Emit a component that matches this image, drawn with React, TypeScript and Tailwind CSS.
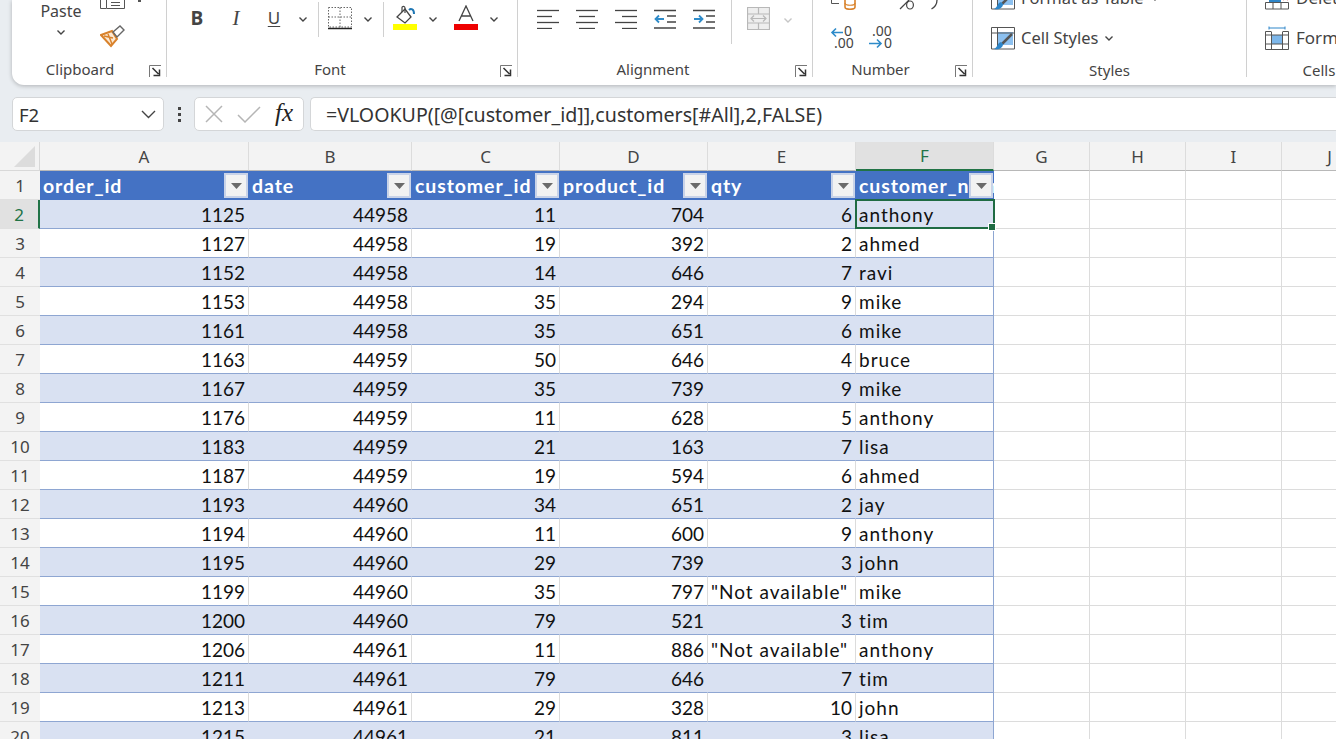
import React from "react";

const Chev = ({ className = "" }: { className?: string }) => (
  <svg width="10" height="7" viewBox="0 0 10 7" className={`shrink-0 ${className}`}>
    <path d="M1.5 1.5 L5 5 L8.5 1.5" fill="none" stroke="#444" strokeWidth="1.4" />
  </svg>
);

const Launcher = () => (
  <svg width="12" height="12" viewBox="0 0 12 12" className="absolute right-[5px] top-[6px]">
    <path d="M.5 12 V.5 H12" fill="none" stroke="#777" strokeWidth="1" />
    <path d="M3.5 3 L9.5 9 M10.5 4.5 V10.5 H4.5" fill="none" stroke="#333" strokeWidth="1.5" />
  </svg>
);

const Sep = ({ h = "h-[35px]", c = "ml-0" }: { h?: string; c?: string }) => <div className={`w-px bg-[#d0d0d0] shrink-0 ${h} ${c}`} />;

function Group({ w, label, launcher, children, last, pl = 0, pr = 0, pt = 1 }: { w: string; label: string; launcher?: boolean; children: React.ReactNode; last?: boolean; pl?: number; pr?: number; pt?: number }) {
  return (
    <div className={`${w} shrink-0 flex flex-col h-[77px] ${last ? "" : "border-r border-[#d0d0d0]"}`}>
      <div className="h-[59px] overflow-hidden">{children}</div>
      <div className="relative h-[18px] flex items-center justify-center text-[15px] text-[#444] leading-none">
        <span style={{ paddingLeft: pl, paddingRight: pr, paddingTop: pt * 2 }}>{label}</span>
        {launcher && <Launcher />}
      </div>
    </div>
  );
}

const AlignIcon = ({ kind }: { kind: "l" | "c" | "r" }) => {
  const rows = kind === "l" ? [[0, 22], [0, 15], [0, 22], [0, 15]] : kind === "c" ? [[0, 22], [3, 19], [0, 22], [3, 19]] : [[0, 22], [7, 22], [0, 22], [7, 22]];
  return (
    <svg width="22" height="21" viewBox="0 0 22 21">
      {rows.map((r, i) => (
        <path key={i} d={`M${r[0]} ${2.5 + i * 6} H${r[1]}`} stroke="#444" strokeWidth="1.3" />
      ))}
    </svg>
  );
};

const IndentIcon = ({ dir }: { dir: "in" | "out" }) => (
  <svg width="22" height="21" viewBox="0 0 22 21">
    <path d="M0 2.5 H22 M0 20 H22" stroke="#444" strokeWidth="1.3" />
    <path d="M13 8 H22 M13 14 H22" stroke="#444" strokeWidth="1.3" />
    {dir === "out" ? (
      <path d="M10 11 H1.5 M5 7.5 L1.5 11 L5 14.5" fill="none" stroke="#2e8bc9" strokeWidth="1.8" />
    ) : (
      <path d="M1 11 H9.5 M6 7.5 L9.5 11 L6 14.5" fill="none" stroke="#2e8bc9" strokeWidth="1.8" />
    )}
  </svg>
);

const CellStylesIcon = () => (
  <svg width="24" height="23" viewBox="0 0 24 23" className="shrink-0">
    <rect x="6" y="5" width="16" height="13" fill="#8cc0ef" />
    <path d="M.5 22 V.5 H23.5 V22 H.5 M.5 6 H23.5 M6.5 .5 V22" fill="none" stroke="#555" strokeWidth="1" />
    <path d="M21 7 L11 17" stroke="#555" strokeWidth="2.5" />
    <path d="M10 15 C6 16 7 20 3 22 C8 23 12 21 12 17 Z" fill="#2e86c9" />
  </svg>
);

function Ribbon() {
  return (
    <div className="ml-[12px] h-[85px] bg-white rounded-bl-[12px] shadow-[0_1px_4px_rgba(0,0,0,0.25)] flex overflow-hidden font-['Noto_Sans',sans-serif]">
      {/* Clipboard */}
      <Group w="w-[155px]" label="Clipboard" launcher pr={18}>
        <div className="flex">
          <div className="ml-[28px] w-[42px] flex flex-col items-center text-[16px] text-[#444] leading-[22px]">
            <span>Paste</span>
            <Chev className="mt-[7px]" />
          </div>
          <div className="ml-[18px] flex flex-col">
            <div className="flex items-start">
              <svg width="26" height="9" viewBox="0 0 26 9">
                <path d="M.5 0 V8.5 H6" fill="none" stroke="#555" />
                <path d="M6.5 0 V8.5 H24.5 V0" fill="none" stroke="#555" />
                <path d="M11 2.5 H20 M11 5.5 H20" stroke="#555" />
              </svg>
              <span className="ml-[12px] w-[3px] h-[2px] bg-[#555]" />
            </div>
            <svg width="26" height="24" viewBox="0 0 26 24" className="mt-[15px]">
              <path d="M1 11 L12 7 L17 15 L11 22 Z" fill="#fbe9d4" stroke="#d9822b" strokeWidth="2" />
              <path d="M4 12 L13 14 M8 10 L12 20" stroke="#d9822b" strokeWidth="1.5" />
              <path d="M13 8 L20 2 L24 6 L17 13 Z" fill="#fff" stroke="#666" strokeWidth="1.4" />
            </svg>
          </div>
        </div>
      </Group>

      {/* Font */}
      <Group w="w-[351px]" label="Font" launcher pr={24}>
        <div className="flex items-start pt-[6px] text-[#444]">
          <span className="ml-[23px] w-[14px] text-center text-[19px] leading-[24px] font-bold font-['Open_Sans',sans-serif]">B</span>
          <span className="ml-[25px] w-[14px] text-center text-[21px] leading-[24px] italic font-['Liberation_Serif',serif]">I</span>
          <span className="ml-[24px] w-[14px] text-center text-[17px] leading-[24px] underline underline-offset-2">U</span>
          <Chev className="ml-[17px] mt-[10px]" />
          <Sep c="ml-[10px] -mt-[4px]" />
          <svg width="24" height="24" viewBox="0 0 24 24" className="ml-[9px]">
            <path d="M.5 1.5 H23.5 V21 H.5 Z M12 1.5 V21 M.5 11 H23.5" fill="none" stroke="#666" strokeDasharray="1.5 1.5" />
            <path d="M0 22.5 H24" stroke="#222" strokeWidth="1.5" />
          </svg>
          <Chev className="ml-[11px] mt-[10px]" />
          <Sep c="ml-[10px] -mt-[4px]" />
          <svg width="24" height="26" viewBox="0 0 24 26" className="ml-[9px] -mt-[1px]">
            <path d="M4 12 L12 4 L18 12 L12 18 Z" fill="#fff" stroke="#444" strokeWidth="1.3" />
            <path d="M9 7 V2.5 C9 1 12 1 12 3 V8" fill="none" stroke="#444" strokeWidth="1.2" />
            <path d="M16 5 C18 3 21 4 21 9" fill="none" stroke="#1f77b4" strokeWidth="2" />
            <rect x="0" y="19" width="24" height="6" fill="#ffff00" />
          </svg>
          <Chev className="ml-[11px] mt-[10px]" />
          <svg width="24" height="26" viewBox="0 0 24 26" className="ml-[16px] -mt-[1px]">
            <path d="M5 16 L12 1 L19 16 M7.5 11 H16.5" fill="none" stroke="#444" strokeWidth="1.3" />
            <rect x="0" y="19" width="24" height="6" fill="#ee0000" />
          </svg>
          <Chev className="ml-[11px] mt-[10px]" />
        </div>
      </Group>

      {/* Alignment */}
      <Group w="w-[295px]" label="Alignment" launcher pr={24}>
        <div className="flex items-start pt-[8px]">
          <div className="ml-[19px]"><AlignIcon kind="l" /></div>
          <div className="ml-[17px]"><AlignIcon kind="c" /></div>
          <div className="ml-[17px]"><AlignIcon kind="r" /></div>
          <div className="ml-[17px]"><IndentIcon dir="out" /></div>
          <div className="ml-[17px]"><IndentIcon dir="in" /></div>
          <Sep h="h-[44px]" c="ml-[16px] -mt-[8px]" />
          <svg width="23" height="23" viewBox="0 0 23 23" className="ml-[15px] -mt-[1px]">
            <path d="M.5 .5 H22.5 V22.5 H.5 Z M.5 7 H22.5 M.5 16 H22.5 M11.5 .5 V7 M11.5 16 V22.5" fill="#eee" stroke="#b8b8b8" strokeWidth="1.2" />
            <path d="M4 11.5 H19 M7 8.5 L4 11.5 L7 14.5 M16 8.5 L19 11.5 L16 14.5" fill="none" stroke="#b8b8b8" strokeWidth="1.2" />
          </svg>
          <Chev className="ml-[13px] mt-[9px] opacity-30" />
        </div>
      </Group>

      {/* Number */}
      <Group w="w-[160px]" label="Number" launcher pr={24}>
        <div className="flex flex-col">
          <div className="flex items-end h-[10px]">
            <svg width="25" height="10" viewBox="0 0 25 10" className="ml-[18px]">
              <path d="M.5 0 V3.5 H8" fill="none" stroke="#555" />
              <path d="M14 0 V7 C14 10 24 10 24 7 V0" fill="#fff" stroke="#d9822b" strokeWidth="1.6" />
              <path d="M14 3 C14 6 24 6 24 3" fill="none" stroke="#d9822b" strokeWidth="1.2" />
            </svg>
            <svg width="24" height="10" viewBox="0 0 24 10" className="ml-[36px]">
              <path d="M8 9 L17 0" stroke="#444" strokeWidth="1.2" />
              <ellipse cx="18" cy="5" rx="3.4" ry="4" fill="none" stroke="#444" strokeWidth="1.2" />
            </svg>
            <svg width="8" height="10" viewBox="0 0 8 10" className="ml-[15px]">
              <path d="M6 0 C6 4 4 7 .5 9" fill="none" stroke="#444" strokeWidth="1.3" />
            </svg>
          </div>
          <div className="flex mt-[15px]">
            <svg width="26" height="24" viewBox="0 0 26 24" className="ml-[17px]">
              <text x="14" y="11" fontSize="14" fill="#444" fontFamily="Noto Sans">0</text>
              <text x="4" y="23" fontSize="14" fill="#444" fontFamily="Noto Sans">.00</text>
              <path d="M13 7.5 H2 M6 3.5 L2 7.5 L6 11.5" fill="none" stroke="#2e8bc9" strokeWidth="1.6" />
            </svg>
            <svg width="26" height="24" viewBox="0 0 26 24" className="ml-[13px]">
              <text x="3" y="11" fontSize="14" fill="#444" fontFamily="Noto Sans">.00</text>
              <text x="15" y="23" fontSize="14" fill="#444" fontFamily="Noto Sans">0</text>
              <path d="M0 18.5 H12 M8 14.5 L12 18.5 L8 22.5" fill="none" stroke="#2e8bc9" strokeWidth="1.6" />
            </svg>
          </div>
        </div>
      </Group>

      {/* Styles */}
      <Group w="w-[274px]" label="Styles" pt={2}>
        <div className="flex flex-col pl-[18px] text-[16.5px] text-[#444]">
          <div className="flex items-center h-[24px] -mt-[14px]">
            <CellStylesIcon />
            <span className="ml-[6px] whitespace-nowrap">Format as Table</span>
            <Chev className="ml-[6px]" />
          </div>
          <div className="flex items-center h-[24px] mt-[16px]">
            <CellStylesIcon />
            <span className="ml-[6px] whitespace-nowrap">Cell Styles</span>
            <Chev className="ml-[6px]" />
          </div>
        </div>
      </Group>

      {/* Cells */}
      <Group w="w-[90px]" label="Cells" last pl={54} pt={2}>
        <div className="flex flex-col pl-[18px] text-[17px] text-[#444]">
          <div className="flex items-center h-[24px] -mt-[14px]">
            <svg width="24" height="24" viewBox="0 0 24 24" className="shrink-0">
              <rect x="4" y="10" width="12" height="6" fill="#2e86c9" />
              <path d="M.5 16.5 H23.5 V23 H.5 Z M8 16.5 V23 M16 16.5 V23" fill="none" stroke="#555" />
              <path d="M18 9 L23 14 M23 9 L18 14" stroke="#e33" strokeWidth="1.4" />
            </svg>
            <span className="ml-[7px] whitespace-nowrap">Delete</span>
          </div>
          <div className="flex items-center h-[24px] mt-[16px]">
            <svg width="24" height="24" viewBox="0 0 24 24" className="shrink-0">
              <path d="M4 2 H20 M4 .5 V3.5 M20 .5 V3.5" stroke="#2e86c9" fill="none" />
              <rect x="6" y="9" width="12" height="9" fill="#7db7ea" />
              <path d="M.5 5.5 V23.5 H23.5 V5.5 M.5 5.5 H6 M18 5.5 H23.5 M6.5 5.5 V23.5 M17.5 5.5 V23.5 M.5 9 H23.5 M.5 18 H23.5" fill="none" stroke="#555" />
            </svg>
            <span className="ml-[7px] whitespace-nowrap">Format</span>
          </div>
        </div>
      </Group>
    </div>
  );
}

function FormulaBar() {
  return (
    <div className="h-[34px] mt-[12px] flex items-center font-['Noto_Sans',sans-serif] text-[#333]">
      <div className="ml-[12px] w-[152px] h-[34px] shrink-0 bg-white border border-[#d4d6d8] rounded-[5px] flex items-center justify-between pl-[6px] pr-[7px] pt-[1px] text-[18.5px]">
        <span>F2</span>
        <svg width="15" height="9" viewBox="0 0 15 9"><path d="M1 1 L7.5 7.5 L14 1" fill="none" stroke="#444" strokeWidth="1.4" /></svg>
      </div>
      <div className="ml-[14px] w-[4px] flex flex-col gap-[3px]">
        <span className="w-[3px] h-[3px] bg-[#444]" />
        <span className="w-[3px] h-[3px] bg-[#444]" />
        <span className="w-[3px] h-[3px] bg-[#444]" />
      </div>
      <div className="ml-[12px] w-[110px] h-[34px] shrink-0 bg-white border border-[#d4d6d8] rounded-[5px] flex items-center pl-[9px]">
        <svg width="20" height="20" viewBox="0 0 20 20">
          <path d="M2 2 L18 18 M18 2 L2 18" stroke="#b5b5b5" strokeWidth="1.5" />
        </svg>
        <svg width="26" height="20" viewBox="0 0 26 20" className="ml-[12px]">
          <path d="M2 11 L9 18 L24 3" fill="none" stroke="#b5b5b5" strokeWidth="1.5" />
        </svg>
        <span className="ml-[13px] text-[25px] leading-none italic text-[#222] font-['Liberation_Serif',serif] pb-[3px]">fx</span>
      </div>
      <div className="ml-[6px] flex-1 h-[34px] bg-white border border-r-0 border-[#d4d6d8] rounded-l-[5px] flex items-center pl-[15px] pt-[1px] text-[19.6px] whitespace-nowrap">
        =VLOOKUP([@[customer_id]],customers[#All],2,FALSE)
      </div>
    </div>
  );
}

const columns: { name: string; w: string }[] = [
  { name: "A", w: "w-[209px]" },
  { name: "B", w: "w-[163px]" },
  { name: "C", w: "w-[148px]" },
  { name: "D", w: "w-[148px]" },
  { name: "E", w: "w-[148px]" },
  { name: "F", w: "w-[138px]" },
  { name: "G", w: "w-[96px]" },
  { name: "H", w: "w-[96px]" },
  { name: "I", w: "w-[96px]" },
  { name: "J", w: "w-[96px]" },
];

const NA = '"Not available"';
const data: [number, number, number, number, number | string, string][] = [
  [1125, 44958, 11, 704, 6, "anthony"],
  [1127, 44958, 19, 392, 2, "ahmed"],
  [1152, 44958, 14, 646, 7, "ravi"],
  [1153, 44958, 35, 294, 9, "mike"],
  [1161, 44958, 35, 651, 6, "mike"],
  [1163, 44959, 50, 646, 4, "bruce"],
  [1167, 44959, 35, 739, 9, "mike"],
  [1176, 44959, 11, 628, 5, "anthony"],
  [1183, 44959, 21, 163, 7, "lisa"],
  [1187, 44959, 19, 594, 6, "ahmed"],
  [1193, 44960, 34, 651, 2, "jay"],
  [1194, 44960, 11, 600, 9, "anthony"],
  [1195, 44960, 29, 739, 3, "john"],
  [1199, 44960, 35, 797, NA, "mike"],
  [1200, 44960, 79, 521, 3, "tim"],
  [1206, 44961, 11, 886, NA, "anthony"],
  [1211, 44961, 79, 646, 7, "tim"],
  [1213, 44961, 29, 328, 10, "john"],
  [1215, 44961, 21, 811, 3, "lisa"],
];

const FilterBtn = () => (
  <div className="absolute right-[1px] top-[2px] w-[24px] h-[25px] bg-[#f2f2f2] border-2 border-[#c9d3e8] flex items-center justify-center">
    <svg width="11" height="6" viewBox="0 0 11 6"><path d="M0 0 H11 L5.5 6 Z" fill="#6a6a6a" /></svg>
  </div>
);

const RowHead = ({ n, sel }: { n: number; sel?: boolean }) => (
  <div className={`w-[40px] h-[29px] shrink-0 flex items-center justify-center pt-[1px] text-[17px] border-b border-[#e0e0e0] font-['Noto_Sans',sans-serif] ${sel ? "bg-[#e1e1e1] text-[#217346] border-r-2 border-r-[#217346]" : "bg-[#f3f3f3] text-[#444]"}`}>
    {n}
  </div>
);

function Sheet() {
  const tableCols = columns.slice(0, 6);
  const rest = columns.slice(6);
  const heads = ["order_id", "date", "customer_id", "product_id", "qty", "customer_name"];
  return (
    <div className="mt-[11px] font-['Lato',sans-serif] text-[19px] text-[#111] bg-white">
      <div className="flex h-[29px]">
        <div className="w-[40px] shrink-0 bg-[#f3f3f3] flex items-end justify-end pr-[4px] pb-[3px] border-r border-b border-[#d8d8d8]">
          <svg width="21" height="21" viewBox="0 0 21 21"><path d="M21 0 V21 H0 Z" fill="#dcdcdc" /></svg>
        </div>
        {columns.map((c) => (
          <div key={c.name} className={`${c.w} shrink-0 flex items-center justify-center pt-[1px] text-[17px] font-['Noto_Sans',sans-serif] border-r border-[#dcdcdc] ${c.name === "F" ? "bg-[#e1e1e1] text-[#217346] border-b-2 border-b-[#217346]" : "bg-[#f3f3f3] text-[#444] border-b border-b-[#b8b8b8]"}`}>
            {c.name}
          </div>
        ))}
      </div>

      <div className="flex h-[29px]">
        <RowHead n={1} />
        {tableCols.map((c, i) => (
          <div key={c.name} className={`${c.w} shrink-0 relative bg-[#4472c4] text-white font-bold text-[19.5px] pl-[3px] leading-[29px] tracking-[0.9px] overflow-hidden whitespace-nowrap`}>
            {heads[i]}
            <FilterBtn />
          </div>
        ))}
        {rest.map((c) => (
          <div key={c.name} className={`${c.w} shrink-0 border-r border-b border-[#dcdcdc]`} />
        ))}
      </div>

      {data.map((r, idx) => {
        const band = idx % 2 === 0;
        return (
          <div key={idx} className="flex h-[29px]">
            <RowHead n={idx + 2} sel={idx === 0} />
            {tableCols.map((c, i) => {
              const v = r[i];
              const isStr = typeof v === "string";
              return (
                <div
                  key={c.name}
                  className={`${c.w} shrink-0 relative leading-[29px] whitespace-nowrap border-b border-b-[#8ea6d2] ${isStr ? "pl-[3px] text-left tracking-[1px]" : "pr-[3px] text-right"} ${band ? "bg-[#d9e1f2]" : "bg-white"} ${i === 5 ? "border-r border-r-[#8ea6d2]" : band ? "border-r border-r-transparent" : "border-r border-r-[#dcdcdc]"} ${idx === 0 && i === 5 ? "z-10" : ""}`}
                >
                  {v}
                  {idx === 0 && i === 5 && (
                    <>
                      <div className="absolute -left-px -top-px w-[140px] h-[30px] border-2 border-[#1f6b43]" />
                      <div className="absolute -right-[3px] -bottom-[3px] w-[8px] h-[8px] bg-[#1f6b43] border border-white" />
                    </>
                  )}
                </div>
              );
            })}
            {rest.map((c) => (
              <div key={c.name} className={`${c.w} shrink-0 border-r border-b border-[#dcdcdc]`} />
            ))}
          </div>
        );
      })}
    </div>
  );
}

export default function App() {
  return (
    <div className="w-[1336px] h-[739px] overflow-hidden bg-[#e9edf1]">
      <Ribbon />
      <FormulaBar />
      <Sheet />
    </div>
  );
}
